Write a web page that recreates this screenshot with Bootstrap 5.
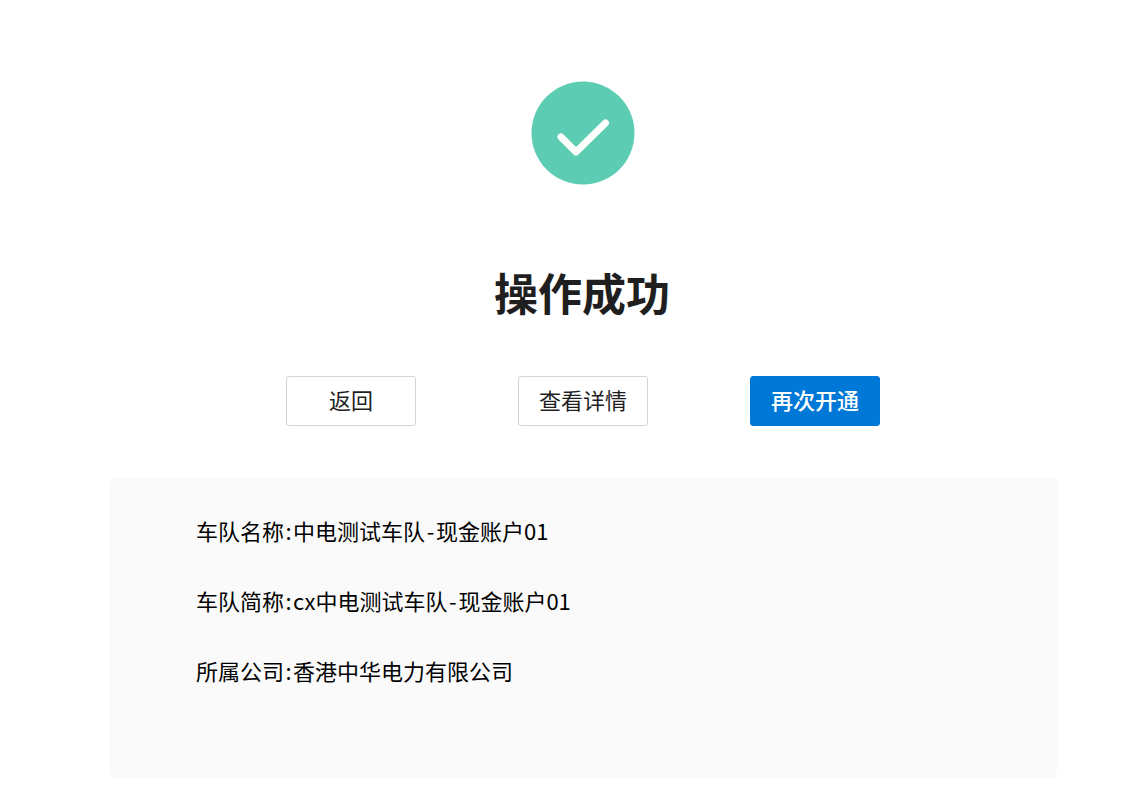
<!DOCTYPE html>
<html lang="zh-CN">
<head>
  <meta charset="UTF-8">
  <meta name="viewport" content="width=device-width, initial-scale=1">
  <title>操作成功</title>
  <link href="https://cdn.jsdelivr.net/npm/bootstrap@5.3.0/dist/css/bootstrap.min.css" rel="stylesheet">
  <style>
    body { font-family: "Noto Sans CJK SC", sans-serif; color: #1a1a1a; }
    .result-page { padding-top: 82px; height: 801px; overflow: hidden; }
    .result-wrap { width: 948px; margin-left: 109px; }
    .result-icon { width: 103px; height: 103px; display: block; }
    .result-title { font-size: 44px; font-weight: 700; line-height: 60px; margin: 77px 0 0; padding-right: 2px; color: #1f1f1f; }
    .result-actions { margin-top: 54px; gap: 102px; }
    .result-btn { width: 130px; height: 50px; padding: 0 0 4px; font-size: 22px; border-radius: 3px; color: #1f1f1f; background: #fff; border: 1px solid #d4d4d4; }
    .result-btn.is-primary { background: #0078d7; border-color: #0078d7; color: #fff; font-weight: 500; }
    .info-panel { height: 301px; margin-top: 51px; padding: 35px 0 0 87px; background: #fafafa; border-radius: 6px; }
    .info-line { font-size: 22px; line-height: 36px; margin-bottom: 34px; color: #000; }
    .info-wide { display: inline-block; text-align: center; }
    .info-colon { width: 9px; }
    .info-dash { width: 11px; }
  </style>
</head>
<body class="bg-white">

  <div class="result-page">
    <div class="result-wrap">
      <div class="d-flex justify-content-center">
        <svg class="result-icon overflow-visible" viewBox="0 0 103 103">
          <circle cx="51" cy="51" r="51.500" fill="#5ccdb3"/>
          <path d="M29 55 L44 70 L73.500 41" fill="none" stroke="#fff" stroke-width="7" stroke-linecap="round" stroke-linejoin="round"/>
        </svg>
      </div>

      <h1 class="result-title text-center">操作成功</h1>

      <div class="result-actions d-flex justify-content-center">
        <button type="button" class="btn result-btn">返回</button>
        <button type="button" class="btn result-btn">查看详情</button>
        <button type="button" class="btn result-btn is-primary">再次开通</button>
      </div>

      <div class="info-panel">
        <p class="info-line">车队名称<span class="info-wide info-colon">:</span>中电测试车队<span class="info-wide info-dash">-</span>现金账户01</p>
        <p class="info-line">车队简称<span class="info-wide info-colon">:</span>cx中电测试车队<span class="info-wide info-dash">-</span>现金账户01</p>
        <p class="info-line">所属公司<span class="info-wide info-colon">:</span>香港中华电力有限公司</p>
      </div>
    </div>
  </div>

</body>
</html>
